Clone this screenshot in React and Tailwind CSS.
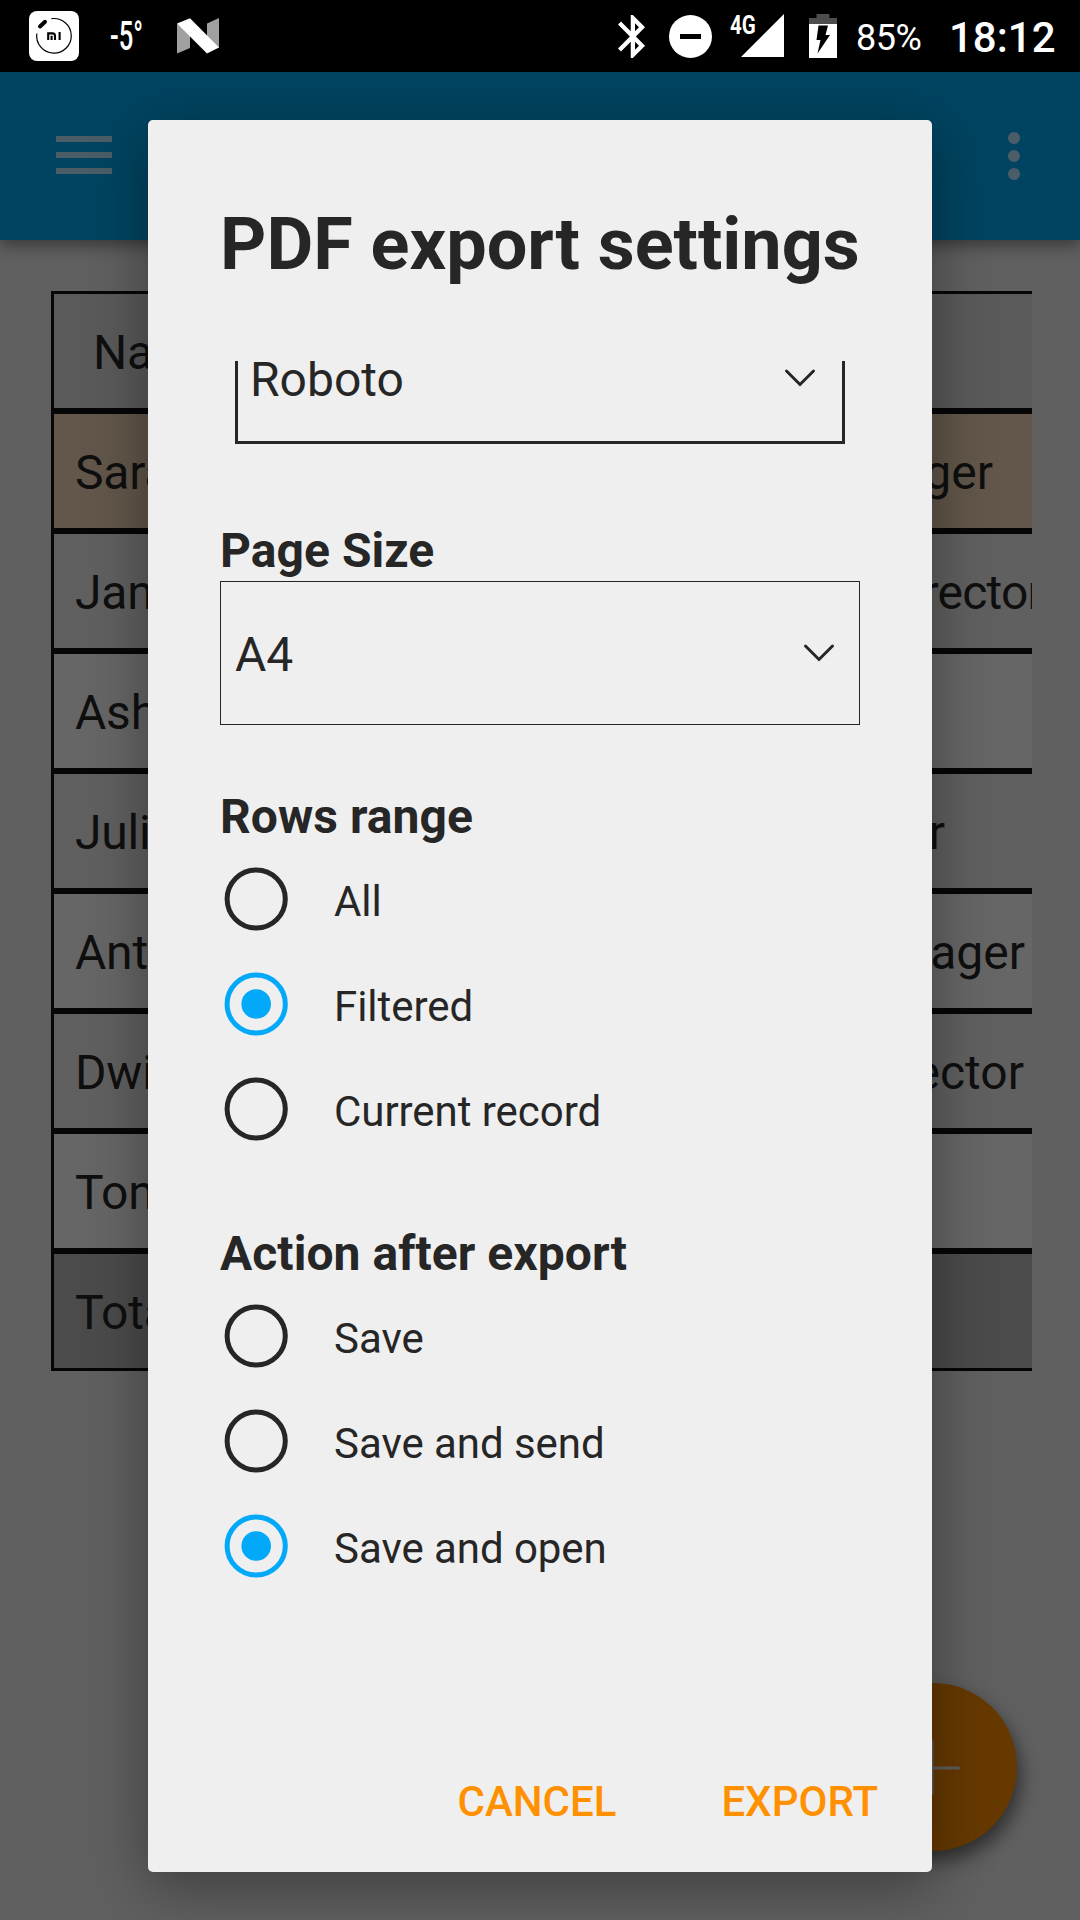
import React from "react";

const rows = [
  { name: "Name", title: "", bg: "bg-[#5a5a5a]", pad: "pl-[39px]", end: "" },
  { name: "Sarah", title: "Manager", bg: "bg-[#62574a]", pad: "pl-[21px]", end: "mr-[39px]" },
  { name: "Jane", title: "Director", bg: "bg-[#606060]", pad: "pl-[21px]", end: "-mr-[11px] tracking-[-0.8px]" },
  { name: "Ashley", title: "", bg: "bg-[#666666]", pad: "pl-[21px]", end: "" },
  { name: "Julian", title: "Manager", bg: "bg-[#606060]", pad: "pl-[21px]", end: "mr-[87px]" },
  { name: "Anthony", title: "Manager", bg: "bg-[#666666]", pad: "pl-[21px]", end: "mr-[7px]" },
  { name: "Dwight", title: "Director", bg: "bg-[#606060]", pad: "pl-[21px]", end: "mr-[8px]" },
  { name: "Tony", title: "", bg: "bg-[#666666]", pad: "pl-[21px]", end: "" },
  { name: "Total", title: "", bg: "bg-[#4b4b4b]", pad: "pl-[21px]", end: "" },
];

function StatusBar() {
  return (
    <div className="flex h-[72px] items-start bg-black text-white">
      <svg className="ml-[29px] mt-[11px]" width="50" height="50" viewBox="0 0 50 50">
        <rect width="50" height="50" rx="8" fill="#fff" />
        <path d="M22.5 7.7A17.3 17.3 0 1 1 7.8 22.5" fill="none" stroke="#000" strokeWidth="1.2" />
        <path d="M11 15.5L16 10.8" stroke="#000" strokeWidth="4" strokeLinecap="round" />
        <path d="M19.2 29v-6.6h4.3q2.5 0 2.5 2.5V29M22.6 24.8V29M30.6 21V29" fill="none" stroke="#000" strokeWidth="2.1" />
      </svg>
      <div className="ml-[31px] mt-[16px] w-[35px] text-[40px] font-medium leading-[42px]">
        <span className="inline-block origin-left scale-x-[0.64] whitespace-nowrap">-5°</span>
      </div>
      <svg className="ml-[32px] mt-[18px]" width="42" height="36" viewBox="0 0 42 36">
        <path d="M0 6L13 10V30L0 35.5zM30 5.500L42 0V30L30 26z" fill="#a0a0a0" />
        <path d="M0 5.500L13 .3L42 29.500L30 35.500z" fill="#fff" />
      </svg>
      <div className="ml-auto flex items-start">
        <svg className="mt-[15px]" width="27" height="43" viewBox="5 2 12.71 20" preserveAspectRatio="none">
          <path fill="#fff" d="M17.71 7.71L12 2h-1v7.59L6.41 5 5 6.41 10.59 12 5 17.59 6.41 19 11 14.41V22h1l5.71-5.71-4.3-4.29 4.3-4.29zM13 5.83l1.88 1.88L13 9.59V5.83zm1.88 10.46L13 18.17v-3.76l1.88 1.88z" />
        </svg>
        <div className="ml-[24px] mt-[15px] flex h-[43px] w-[43px] items-center justify-center rounded-full bg-white">
          <div className="h-[5px] w-[21px] bg-black" />
        </div>
        <div className="relative ml-[18px] mt-[14px] h-[44px] w-[54px]">
          <svg className="ml-[11px]" width="43" height="43" viewBox="0 0 43 43">
            <path d="M43 0V43H0z" fill="#fff" />
          </svg>
          <span className="absolute left-0 top-px origin-left scale-x-[0.82] text-[25px] font-bold leading-[22px]">4G</span>
        </div>
        <svg className="ml-[25px] mt-[14px]" width="28" height="44" viewBox="0 0 28 44">
          <path d="M7.500 0H20.500V4H28V10H0V4H7.500z" fill="#4d4d4d" />
          <path d="M0 10H28V44H0z" fill="#fff" />
          <path d="M9.500 11.500H19L16.500 21H21L8.500 39.500L11.500 26H7.500z" fill="#000" />
        </svg>
        <span className="ml-[19px] mt-[17px] w-[66px] whitespace-nowrap text-[36px] leading-[42px] tracking-[-0.5px]">85%</span>
        <span className="ml-[27px] mr-[26px] mt-[14px] w-[105px] whitespace-nowrap text-[42px] font-medium leading-[48px]">18:12</span>
      </div>
    </div>
  );
}

function AppBar() {
  return (
    <div className="relative flex h-[168px] justify-between bg-[#004461] shadow-[0_6px_14px_rgba(0,0,0,0.4)]">
      <div className="ml-[56px] mt-[64px] flex flex-col gap-[10px]">
        <div className="h-[6px] w-[56px] bg-[#4b5e68]" />
        <div className="h-[6px] w-[56px] bg-[#4b5e68]" />
        <div className="h-[6px] w-[56px] bg-[#4b5e68]" />
      </div>
      <div className="mr-[60px] mt-[60px] flex flex-col gap-[6px]">
        <div className="h-[12px] w-[12px] rounded-full bg-[#4b5e68]" />
        <div className="h-[12px] w-[12px] rounded-full bg-[#4b5e68]" />
        <div className="h-[12px] w-[12px] rounded-full bg-[#4b5e68]" />
      </div>
    </div>
  );
}

function Table() {
  return (
    <div className="ml-[51px] mt-[51px] w-[981px] overflow-hidden">
      {rows.map((r) => (
        <div
          key={r.name}
          className={`flex h-[120px] items-center justify-between overflow-hidden border-y-[3px] border-l-[3px] border-[#060606] pt-[3px] text-[48px] leading-[60px] text-[#0f0f0f] ${r.bg} ${r.pad}`}
        >
          <span className="tracking-[-0.2px]">{r.name}</span>
          <span className={r.end}>{r.title}</span>
        </div>
      ))}
    </div>
  );
}

function Chevron({ className = "" }) {
  return (
    <svg className={className} width="32" height="20" viewBox="0 0 32 20">
      <path d="M2.500 3L16 16.500L29.500 3" fill="none" stroke="#262626" strokeWidth="3" strokeLinecap="round" />
    </svg>
  );
}

function RadioRow({ label, checked }) {
  const color = checked ? "#03a9f9" : "#262626";
  return (
    <label className="flex h-[105px] items-start pl-[4px] pt-[20px]">
      <svg width="64" height="64" viewBox="0 0 64 64">
        <circle cx="32.200" cy="32" r="29.100" fill="none" stroke={color} strokeWidth="5" />
        {checked && <circle cx="32.200" cy="32" r="14.800" fill={color} />}
      </svg>
      <span className="ml-[46px] pt-[3px] text-[42px] leading-[64px] tracking-[-0.05px]">{label}</span>
    </label>
  );
}

function Heading({ children, className }) {
  return <h2 className={`text-[48px] font-bold leading-[60px] tracking-[0.05px] ${className}`}>{children}</h2>;
}

function Dialog() {
  return (
    <div className="absolute left-[148px] top-[120px] flex h-[1752px] w-[784px] flex-col rounded-[5px] bg-[#efefef] px-[72px] text-[#262626] shadow-[0_14px_60px_rgba(0,0,0,0.38)]">
      <h1 className="mt-[83px] whitespace-nowrap text-[72px] font-bold leading-[84px]">PDF export settings</h1>
      <div className="mt-[74px] h-[1300px] overflow-hidden">
        <div className="mx-[15px] -mt-[46px] flex h-[129px] items-center justify-between border-[3px] border-[#262626] pl-[12px] pr-[26px]">
          <span className="text-[48px] leading-[60px]">Roboto</span>
          <Chevron className="mb-[4px]" />
        </div>
        <Heading className="mt-[77px]">Page Size</Heading>
        <div className="flex h-[144px] items-center justify-between border border-[#262626] pl-[14px] pr-[24px]">
          <span className="pt-[3px] text-[48px] leading-[60px]">A4</span>
          <Chevron />
        </div>
        <Heading className="mt-[62px]">Rows range</Heading>
        <RadioRow label="All" />
        <RadioRow label="Filtered" checked />
        <RadioRow label="Current record" />
        <Heading className="mt-[62px]">Action after export</Heading>
        <RadioRow label="Save" />
        <RadioRow label="Save and send" />
        <RadioRow label="Save and open" checked />
      </div>
      <div className="-mr-[18px] mt-[111px] flex justify-end gap-[105px] text-[42px] font-medium leading-[60px] text-[#ff9100]">
        <button>CANCEL</button>
        <button>EXPORT</button>
      </div>
    </div>
  );
}

export default function App() {
  return (
    <div className="relative h-[1920px] w-[1080px] overflow-hidden bg-[#606060] font-['Roboto',sans-serif]">
      <StatusBar />
      <AppBar />
      <Table />
      <div className="absolute left-[849px] top-[1683px] flex h-[168px] w-[168px] items-center justify-center rounded-full bg-[#663900] shadow-[4px_10px_18px_rgba(0,0,0,0.5)]">
        <svg width="56" height="56" viewBox="0 0 56 56">
          <path d="M27 2.500V55M0 29H53.500" stroke="#5e5e5e" strokeWidth="3" strokeLinecap="round" />
        </svg>
      </div>
      <Dialog />
    </div>
  );
}
